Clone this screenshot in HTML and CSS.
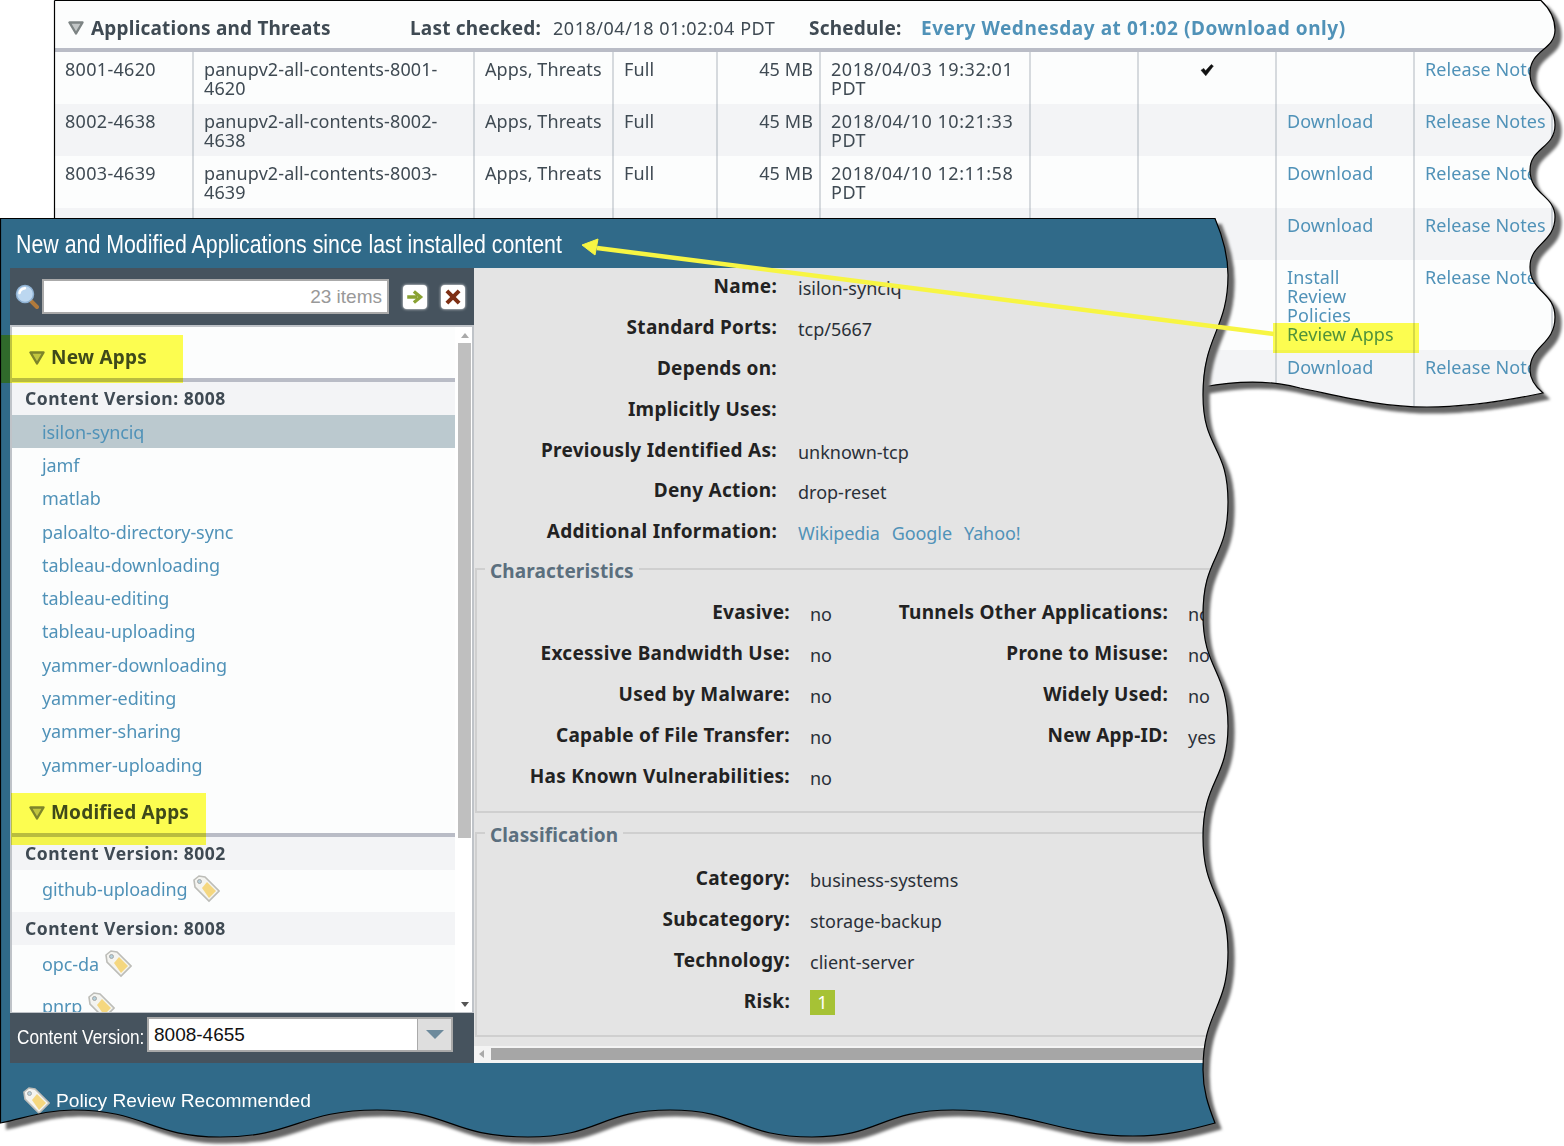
FILE: index.html
```html
<!DOCTYPE html>
<html lang="en">
<head>
<meta charset="utf-8">
<title>New and Modified Applications</title>
<link rel="stylesheet" href="styles.css">
</head>
<body>
<svg class="defs" width="0" height="0" aria-hidden="true">
  <defs>
    <symbol id="tag" viewBox="0 0 28 28">
      <path d="M2 5 7 1 13 2 27 16 17 26 3 12Z" fill="#f4f4f0" stroke="#bdbdb8" stroke-width="1.6"/>
      <path d="M10 13 15 7 24 16 17 23Z" fill="#f5d77f"/>
      <circle cx="7.5" cy="6.5" r="2" fill="#b5d0da" stroke="#9a9a9a" stroke-width=".8"/>
    </symbol>
    <symbol id="tri" viewBox="0 0 16 14">
      <path d="M1.5 1.5H14.5L8 12.5Z" fill="#c2c6c6" stroke="#7d8484" stroke-width="2.4" stroke-linejoin="round"/>
    </symbol>
  </defs>
</svg>
<main class="stage">

  <section class="win win-back">
    <div class="sheet sheet-back">
      <header class="back-head">
        <svg class="tri"><use href="#tri"/></svg>
        <strong class="bh-title">Applications and Threats</strong>
        <strong class="bh-checked">Last checked:</strong>
        <span class="bh-date">2018/04/18 01:02:04 PDT</span>
        <strong class="bh-sched">Schedule:</strong>
        <a class="bh-link">Every Wednesday at 01:02 (Download only)</a>
      </header>
      <div class="rows">
        <div class="row">
          <div class="c dt">8001-4620</div><div class="c">panupv2-all-contents-8001-4620</div><div class="c">Apps, Threats</div><div class="c">Full</div><div class="c num">45 MB</div><div class="c dt">2018/04/03 19:32:01 PDT</div><div class="c"></div>
          <div class="c mid"><svg class="check" viewBox="0 0 14 12"><path d="M1 6.2 3.8 4.4 5.6 6.8 11.2 .5 13.4 2 5.8 11.8Z" fill="#111" stroke="#111" stroke-width=".5"/></svg></div>
          <div class="c"></div><div class="c"><a>Release Notes</a></div><div class="c"></div>
        </div>
        <div class="row alt">
          <div class="c dt">8002-4638</div><div class="c">panupv2-all-contents-8002-4638</div><div class="c">Apps, Threats</div><div class="c">Full</div><div class="c num">45 MB</div><div class="c dt">2018/04/10 10:21:33 PDT</div><div class="c"></div><div class="c"></div>
          <div class="c"><a>Download</a></div><div class="c"><a>Release Notes</a></div><div class="c"></div>
        </div>
        <div class="row">
          <div class="c dt">8003-4639</div><div class="c">panupv2-all-contents-8003-4639</div><div class="c">Apps, Threats</div><div class="c">Full</div><div class="c num">45 MB</div><div class="c dt">2018/04/10 12:11:58 PDT</div><div class="c"></div><div class="c"></div>
          <div class="c"><a>Download</a></div><div class="c"><a>Release Notes</a></div><div class="c"></div>
        </div>
        <div class="row alt">
          <div class="c dt">8004-4641</div><div class="c">panupv2-all-contents-8004-4641</div><div class="c">Apps, Threats</div><div class="c">Full</div><div class="c num">45 MB</div><div class="c dt">2018/04/11 09:14:20 PDT</div><div class="c"></div><div class="c"></div>
          <div class="c"><a>Download</a></div><div class="c"><a>Release Notes</a></div><div class="c"></div>
        </div>
        <div class="row tall">
          <div class="c"></div><div class="c"></div><div class="c"></div><div class="c"></div><div class="c"></div><div class="c"></div><div class="c"></div><div class="c"></div>
          <div class="c"><a>Install</a><br><a>Review</a><br><a>Policies</a><br><a>Review Apps</a></div><div class="c"><a>Release Notes</a></div><div class="c"></div>
        </div>
        <div class="row alt last">
          <div class="c"></div><div class="c"></div><div class="c"></div><div class="c"></div><div class="c"></div><div class="c"></div><div class="c"></div><div class="c"></div>
          <div class="c"><a>Download</a></div><div class="c"><a>Release Notes</a></div><div class="c"></div>
        </div>
      </div>
    </div>
    <svg class="edge" width="1510" height="420"><path d="M.5 .5H1487C1495 8 1501 18 1501 30C1501 50 1476 50 1476 73C1476 98 1501 100 1501 125C1501 148 1476 148 1476 170C1476 195 1501 195 1501 217C1501 243 1476 243 1476 267C1476 292 1501 292 1501 317C1501 345 1476 345 1476 370C1476 380 1483 388 1489 393C1456 400 1416 407 1373 407C1326 407 1286 396 1246 388C1216 380 1186 380 1149 387"/><path d="M.5 .5V230"/></svg>
  </section>

  <section class="win win-dialog">
    <div class="sheet sheet-dialog">
      <h1 class="d-title"><span>New and Modified Applications since last installed content</span></h1>
      <div class="d-body">
        <div class="left">
          <div class="toolbar">
            <svg class="mag" viewBox="0 0 24 26"><path d="M15 16 22 23" stroke="#b07a3c" stroke-width="4" stroke-linecap="round"/><circle cx="10" cy="10" r="8.5" fill="#bcd7f0" stroke="#8fb2d4" stroke-width="1.5"/><path d="M4.5 9C5 6 7 4.5 10 4.2" fill="none" stroke="#fff" stroke-width="2.4" stroke-linecap="round"/></svg>
            <div class="search">23 items</div>
            <div class="ibtn"><svg viewBox="0 0 18 18"><path d="M2 9H11M8 4 14 9 8 14" fill="none" stroke="#8aa233" stroke-width="3"/></svg></div>
            <div class="ibtn"><svg viewBox="0 0 18 18"><path d="M3.5 3.5 14.5 14.5M14.5 3.5 3.5 14.5" fill="none" stroke="#7e2f14" stroke-width="3.6"/></svg></div>
          </div>
          <div class="listbox">
            <div class="list">
              <div class="grp"><svg class="tri"><use href="#tri"/></svg><strong>New Apps</strong></div>
              <div class="ver">Content Version: 8008</div>
              <a class="item sel">isilon-synciq</a>
              <a class="item">jamf</a>
              <a class="item">matlab</a>
              <a class="item">paloalto-directory-sync</a>
              <a class="item">tableau-downloading</a>
              <a class="item">tableau-editing</a>
              <a class="item">tableau-uploading</a>
              <a class="item">yammer-downloading</a>
              <a class="item">yammer-editing</a>
              <a class="item">yammer-sharing</a>
              <a class="item">yammer-uploading</a>
              <div class="grp"><svg class="tri"><use href="#tri"/></svg><strong>Modified Apps</strong></div>
              <div class="ver">Content Version: 8002</div>
              <a class="item tagged">github-uploading<svg class="tag"><use href="#tag"/></svg></a>
              <div class="ver">Content Version: 8008</div>
              <a class="item tagged">opc-da<svg class="tag"><use href="#tag"/></svg></a>
              <a class="item tagged">pnrp<svg class="tag"><use href="#tag"/></svg></a>
            </div>
            <div class="vscroll">
              <i class="up"></i><b></b><i class="down"></i>
            </div>
          </div>
          <div class="verbar">
            <span class="vb-label">Content Version:</span>
            <div class="combo"><span>8008-4655</span><i></i></div>
          </div>
        </div>
        <div class="right">
          <div class="details kv">
            <strong>Name:</strong><span>isilon-synciq</span>
            <strong>Standard Ports:</strong><span>tcp/5667</span>
            <strong>Depends on:</strong><span></span>
            <strong>Implicitly Uses:</strong><span></span>
            <strong>Previously Identified As:</strong><span>unknown-tcp</span>
            <strong>Deny Action:</strong><span>drop-reset</span>
            <strong>Additional Information:</strong><span class="links"><a>Wikipedia</a><a>Google</a><a>Yahoo!</a></span>
          </div>
          <div class="fs fs-char">
            <div class="legend">Characteristics</div>
            <div class="chars">
              <strong>Evasive:</strong><span>no</span><strong>Tunnels Other Applications:</strong><span>no</span>
              <strong>Excessive Bandwidth Use:</strong><span>no</span><strong>Prone to Misuse:</strong><span>no</span>
              <strong>Used by Malware:</strong><span>no</span><strong>Widely Used:</strong><span>no</span>
              <strong>Capable of File Transfer:</strong><span>no</span><strong>New App-ID:</strong><span>yes</span>
              <strong>Has Known Vulnerabilities:</strong><span>no</span>
            </div>
          </div>
          <div class="fs fs-class">
            <div class="legend">Classification</div>
            <div class="cls">
              <strong>Category:</strong><span>business-systems</span>
              <strong>Subcategory:</strong><span>storage-backup</span>
              <strong>Technology:</strong><span>client-server</span>
              <strong>Risk:</strong><span class="riskcell"><em class="risk">1</em></span>
            </div>
          </div>
          <div class="hscroll"><i></i><b></b></div>
        </div>
      </div>
      <footer class="d-foot"><svg class="tag"><use href="#tag"/></svg><span>Policy Review Recommended</span></footer>
    </div>
    <svg class="edge" width="1240" height="928"><path d="M.5 .5H1215C1222 17 1228 37 1228 57C1228 112 1203 117 1203 177C1203 232 1228 227 1228 284C1228 342 1203 337 1203 397C1203 452 1228 452 1228 508C1228 562 1203 562 1203 619C1203 677 1228 677 1228 734C1228 792 1203 792 1203 852C1203 872 1208 887 1215 905C1190 912 1165 918 1133 918C1060 918 1030 892 953 892C880 892 880 919 812 919C740 919 740 892 670 892C600 892 600 919 528 919C450 919 450 892 377 892C300 892 295 919 220 919C150 919 145 892 73 892C45 892 25 900 .5 905Z"/></svg>
  </section>

  <div class="hl hl-new"></div>
  <div class="hl hl-mod"></div>
  <div class="hl hl-rev"></div>
  <svg class="callout" width="1564" height="400"><path d="M597 248 1274 334" stroke="#f7f543" stroke-width="4.5"/><path d="M582 245 598 239 595 255Z" fill="#f7f543" stroke="#f7f543" stroke-width="1"/></svg>
</main>
</body>
</html>
```
FILE: styles.css
```css
*{box-sizing:border-box}
html,body{margin:0;padding:0;background:#fff}
body{font-family:"Noto Sans","Open Sans",sans-serif;font-size:18px;color:#3f4a53}
a{color:#5092b8;text-decoration:none}
strong{font-weight:700}
.defs{position:absolute}
.stage{position:relative;width:1564px;height:1146px;overflow:hidden;background:#fff}

.win{position:absolute;filter:drop-shadow(6px 6px 1.5px #666)}
.win-back{left:54px;top:0;width:1510px;height:420px}
.win-dialog{left:0;top:218px;width:1240px;height:928px}
.sheet{width:100%;height:100%}
.edge{position:absolute;left:0;top:0;overflow:visible;pointer-events:none}
.edge path{fill:none;stroke:#000;stroke-width:1.2}

.sheet-back{
  background:#fcfdfd;
  clip-path:path('M0 0L1487 0C1495 8 1501 18 1501 30C1501 50 1476 50 1476 73C1476 98 1501 100 1501 125C1501 148 1476 148 1476 170C1476 195 1501 195 1501 217C1501 243 1476 243 1476 267C1476 292 1501 292 1501 317C1501 345 1476 345 1476 370C1476 380 1483 388 1489 393C1456 400 1416 407 1373 407C1326 407 1286 396 1246 388C1216 380 1186 380 1149 387L0 387Z');
}
.back-head{display:flex;align-items:center;height:52px;padding:7px 0 0 14px;border-bottom:4px solid #b9bcc6;white-space:nowrap;font-size:19px}
.back-head strong{letter-spacing:.2px}
.tri{width:16px;height:14px;flex:none}
.back-head .tri{margin-right:7px}
.bh-title{width:319px}
.bh-checked{width:143px}
.bh-date{width:256px;font-size:18px;letter-spacing:.53px}
.bh-sched{width:112px}
.bh-link{font-weight:700;letter-spacing:.55px}

.row{display:grid;grid-template-columns:138px 281px 139px 104px 103px 210px 108px 138px 138px 138px 1fr;height:52px;line-height:19px}
.alt{background:#f3f4f6}
.tall{height:90px}
.last{height:60px}
.c{padding:8px 4px 0 10px;border-left:2px solid rgba(110,125,140,.27);letter-spacing:.1px}
.c:first-child{border-left:0}
.dt{letter-spacing:.55px}
.c:first-child.dt{padding-left:11px;letter-spacing:.3px}
.num{text-align:right;padding-right:6px}
.mid{text-align:center;padding-left:4px}
.check{width:14px;height:12px;margin-top:4px}

.sheet-dialog{
  display:flex;flex-direction:column;background:#306a89;
  clip-path:path('M0 0L1215 0C1222 17 1228 37 1228 57C1228 112 1203 117 1203 177C1203 232 1228 227 1228 284C1228 342 1203 337 1203 397C1203 452 1228 452 1228 508C1228 562 1203 562 1203 619C1203 677 1228 677 1228 734C1228 792 1203 792 1203 852C1203 872 1208 887 1215 905C1190 912 1165 918 1133 918C1060 918 1030 892 953 892C880 892 880 919 812 919C740 919 740 892 670 892C600 892 600 919 528 919C450 919 450 892 377 892C300 892 295 919 220 919C150 919 145 892 73 892C45 892 25 900 0 905Z');
}
.d-title{margin:0;height:50px;padding:1px 0 0 16px;display:flex;align-items:center;font:400 26px/1 "Liberation Sans",sans-serif;color:#fff;white-space:nowrap}
.d-title span{transform:scaleX(.821);transform-origin:left center}
.d-body{display:flex;height:795px;padding-left:10px;flex:none}
.left{width:464px;flex:none;display:flex;flex-direction:column}
.toolbar{height:57px;background:#46535e;display:flex;align-items:center;padding-left:5px;gap:14px}
.mag{width:24px;height:26px;margin-right:-11px}
.search{width:347px;height:35px;background:#fff;border:2px solid #aaa;font:19px/31px "Liberation Sans",sans-serif;color:#999;text-align:right;padding-right:5px}
.ibtn{width:24px;height:24px;border-radius:4px;background:#fff;box-shadow:0 0 3px #fff;display:flex;align-items:center;justify-content:center}
.ibtn svg{width:20px;height:20px}

.listbox{height:688px;display:flex;border:2px solid #bfc3c8;border-bottom-width:1px;background:#fcfdfd;flex:none}
.list{width:443px;overflow:hidden;flex:none;letter-spacing:-.1px}
.grp{height:56px;display:flex;align-items:flex-end;gap:6px;padding:0 0 10px 17px;border-bottom:4px solid #b9bcc6;color:#3f4a53;font-size:19px;letter-spacing:.2px}
.grp:first-child{height:55px}
.grp strong{line-height:22px}
.grp .tri{margin-bottom:3px}
.ver{height:33px;line-height:33px;background:#f3f4f6;padding-left:13px;font-weight:700;font-size:17.5px;letter-spacing:.5px;color:#3f4a53}
.item{display:flex;align-items:center;height:33.3px;padding-left:30px;white-space:nowrap}
.sel{background:#bbc9cf}
.tagged{height:42px;padding-bottom:4px}
.tag{width:28px;height:28px;flex:none}
.item .tag{margin-left:5px}
.vscroll{flex:1;background:#fff;display:flex;flex-direction:column;align-items:center;padding-left:2px}
.vscroll b{display:block;width:13px;height:495px;background:#bfbfbf;margin-bottom:auto}
.vscroll i{display:block;width:0;height:0;border-left:4px solid transparent;border-right:4px solid transparent}
.up{border-bottom:5px solid #aaa;margin:6px 0 5px}
.down{border-top:5px solid #555;margin-bottom:5px}

.verbar{height:50px;background:#46535e;display:flex;align-items:center;padding-left:7px;gap:5px}
.vb-label{font:21px/1 "Liberation Sans",sans-serif;color:#fff;white-space:nowrap;width:125px;flex:none;transform:scaleX(.82);transform-origin:left center;margin-bottom:4px}
.combo{width:306px;height:35px;display:flex;align-self:flex-start;margin-top:4px;border:2px solid #a9a9a9;background:#fff;font:19px/31px "Liberation Sans",sans-serif;color:#111}
.combo span{flex:1;padding-left:5px}
.combo i{width:34px;background:#dedede;border-left:1px solid #aaa;display:flex;align-items:center;justify-content:center}
.combo i::after{content:"";border-left:9px solid transparent;border-right:9px solid transparent;border-top:9px solid #6d8a9c}

.right{flex:1;min-width:0;background:#e4e4e4;display:flex;flex-direction:column;color:#2a3038;overflow:hidden}
.kv,.chars,.cls{display:grid;line-height:19px}
.right strong{text-align:right;color:#222;white-space:nowrap;font-size:19px;letter-spacing:.28px}
.right span{margin-top:2px;min-height:19px;white-space:nowrap}
.details{grid-template-columns:303px 1fr;column-gap:21px;row-gap:19.9px;padding-top:9px;margin-bottom:24.6px}
.links a{margin-right:12px;letter-spacing:-.1px}
.fs{border:solid #cfcfcf;border-width:2px 0 2px 2px;margin-left:1px;flex:none}
.legend{display:table;margin:-8px 0 0 8px;padding:0 5px;background:#e4e4e4;color:#5b6f7e;font-weight:700;font-size:19px;line-height:19px;letter-spacing:.13px}
.fs-char{height:245px;margin-bottom:19px}
.chars{grid-template-columns:313px 60px 278px 1fr;column-gap:20px;row-gap:20px;margin-top:22px}
.fs-class{height:205px}
.cls{grid-template-columns:313px 1fr;column-gap:20px;row-gap:20px;margin-top:24px}
.right .riskcell{display:block;height:19px}
.risk{display:block;width:25px;height:25px;margin-top:-4px;background:#a6c235;color:#fff;font-style:normal;text-align:center;line-height:25px}
.hscroll{margin-top:auto;height:17px;background:#f4f4f4;display:flex;align-items:center;padding:1px 0 2px 5px}
.hscroll i{width:0;height:0;border-top:4px solid transparent;border-bottom:4px solid transparent;border-right:5px solid #aaa;margin-right:7px}
.hscroll b{flex:1;height:12px;background:#a6a6a6}

.d-foot{display:flex;align-items:center;gap:6px;padding:24px 0 0 22px;font:19.2px/28px "Liberation Sans",sans-serif;color:#fff}

.hl{position:absolute;background:#ffff50;mix-blend-mode:multiply}
.hl-new{left:0;top:335px;width:183px;height:48px}
.hl-mod{left:11px;top:793px;width:195px;height:52px}
.hl-rev{left:1273px;top:323px;width:146px;height:30px}
.callout{position:absolute;left:0;top:0}
```
